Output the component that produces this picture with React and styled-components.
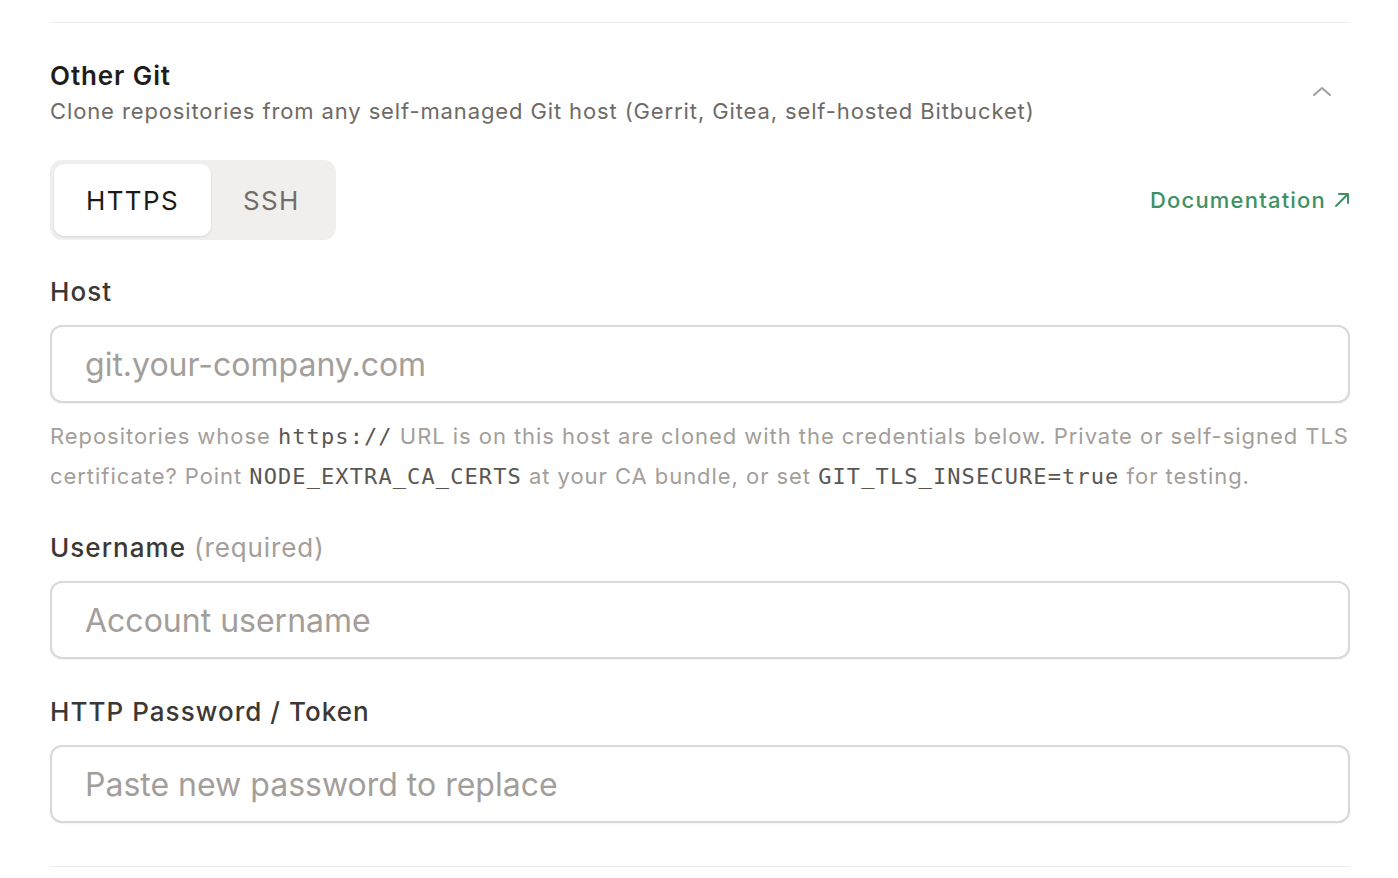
import React, { useState } from "react";
import styled, { createGlobalStyle } from "styled-components";

const GlobalStyle = createGlobalStyle`
  body {
    margin: 0;
    background: #ffffff;
    font-family: Inter, "Noto Sans", sans-serif;
    -webkit-font-smoothing: antialiased;
  }
`;

function ChevronUp() {
  return (
    <svg width="24" height="24" viewBox="0 0 24 24" fill="none">
      <path
        d="M4 15l8-7 8 7"
        stroke="#a39e9a"
        strokeWidth="2"
        strokeLinecap="round"
        strokeLinejoin="round"
      />
    </svg>
  );
}

function ArrowUpRight() {
  return (
    <svg width="16" height="16" viewBox="0 0 16 16" fill="none">
      <path
        d="M2 14L14 2M5 2h9v9"
        stroke="currentColor"
        strokeWidth="2"
        strokeLinecap="round"
        strokeLinejoin="round"
      />
    </svg>
  );
}

export default function App() {
  const [mode, setMode] = useState("https");

  return (
    <>
      <GlobalStyle />
      <Page>
        <Section>
          <Header>
            <div>
              <Title>Other Git</Title>
              <Subtitle>
                Clone repositories from any self-managed Git host (Gerrit, Gitea,
                self-hosted Bitbucket)
              </Subtitle>
            </div>
            <Toggle>
              <ChevronUp />
            </Toggle>
          </Header>

          <TabRow>
            <Tabs>
              <Tab $active={mode === "https"} onClick={() => setMode("https")}>
                HTTPS
              </Tab>
              <Tab $active={mode === "ssh"} onClick={() => setMode("ssh")}>
                SSH
              </Tab>
            </Tabs>
            <DocLink href="#">
              Documentation <ArrowUpRight />
            </DocLink>
          </TabRow>

          <Field>
            <Label>Host</Label>
            <Input placeholder="git.your-company.com" />
            <Help>
              Repositories whose <Code>https://</Code> URL is on this host are
              cloned with the credentials below. Private or self-signed TLS
              certificate? Point <Code>NODE_EXTRA_CA_CERTS</Code> at your CA
              bundle, or set <Code>GIT_TLS_INSECURE=true</Code> for testing.
            </Help>
          </Field>

          <Field>
            <Label>
              Username <Muted>(required)</Muted>
            </Label>
            <Input placeholder="Account username" />
          </Field>

          <Field $gap={37}>
            <Label>HTTP Password / Token</Label>
            <Input type="password" placeholder="Paste new password to replace" />
          </Field>
        </Section>
      </Page>
    </>
  );
}

const Page = styled.div`
  padding: 22px 48px 0 50px;
`;

const Section = styled.section`
  border-top: 1px solid #efedeb;
  border-bottom: 1px solid #efedeb;
  padding: 37px 0 43px;
`;

const Header = styled.div`
  display: flex;
  align-items: center;
  justify-content: space-between;
`;

const Title = styled.div`
  font-size: 26px;
  line-height: 32px;
  font-weight: 600;
  letter-spacing: 0.9px;
  color: #1f1d1b;
`;

const Subtitle = styled.div`
  margin-top: 6px;
  font-size: 22px;
  line-height: 26px;
  letter-spacing: 0.88px;
  color: #6f6a66;
`;

const Toggle = styled.button`
  border: none;
  background: none;
  padding: 0;
  margin-right: 16px;
  display: flex;
  cursor: pointer;
`;

const TabRow = styled.div`
  margin-top: 36px;
  display: flex;
  align-items: center;
  justify-content: space-between;
`;

const Tabs = styled.div`
  display: flex;
  padding: 4px;
  background: #f0efed;
  border-radius: 12px;
`;

const Tab = styled.button`
  border: none;
  height: 72px;
  padding: 0 32px;
  border-radius: 10px;
  font-family: Inter, sans-serif;
  font-size: 26px;
  font-weight: 400;
  letter-spacing: 1.35px;
  cursor: pointer;
  background: ${(p) => (p.$active ? "#ffffff" : "transparent")};
  color: ${(p) => (p.$active ? "#1c1a18" : "#726d69")};
  box-shadow: ${(p) =>
    p.$active ? "0 1px 3px rgba(0,0,0,0.08), 0 1px 2px rgba(0,0,0,0.04)" : "none"};
`;

const DocLink = styled.a`
  display: flex;
  align-items: center;
  gap: 8px;
  color: #409065;
  font-size: 22px;
  font-weight: 500;
  letter-spacing: 1.2px;
  text-decoration: none;
`;

const Field = styled.div`
  margin-top: ${(p) => p.$gap || 36}px;
  display: flex;
  flex-direction: column;
`;

const Label = styled.label`
  font-size: 26px;
  line-height: 32px;
  font-weight: 500;
  letter-spacing: 1.05px;
  color: #3b3835;
  margin-bottom: 17px;
`;

const Muted = styled.span`
  font-weight: 400;
  letter-spacing: 0.9px;
  color: #a39e9a;
`;

const Input = styled.input`
  box-sizing: border-box;
  width: 100%;
  height: 78px;
  padding: 0 33px;
  border: 2px solid #dad7d4;
  border-radius: 12px;
  box-shadow: 0 1px 2px rgba(0, 0, 0, 0.05);
  font-family: Inter, sans-serif;
  font-size: 32px;
  color: #1f1d1b;
  outline: none;

  &::placeholder {
    color: #a39e9a;
  }
`;

const Help = styled.p`
  margin: 13px 0 0;
  font-size: 22px;
  line-height: 40px;
  letter-spacing: 0.95px;
  color: #a39e9a;
`;

const Code = styled.code`
  font-family: "DejaVu Sans Mono", "Liberation Mono", monospace;
  font-size: 22px;
  line-height: 1;
  letter-spacing: 1.1px;
  color: #5a5652;
`;
